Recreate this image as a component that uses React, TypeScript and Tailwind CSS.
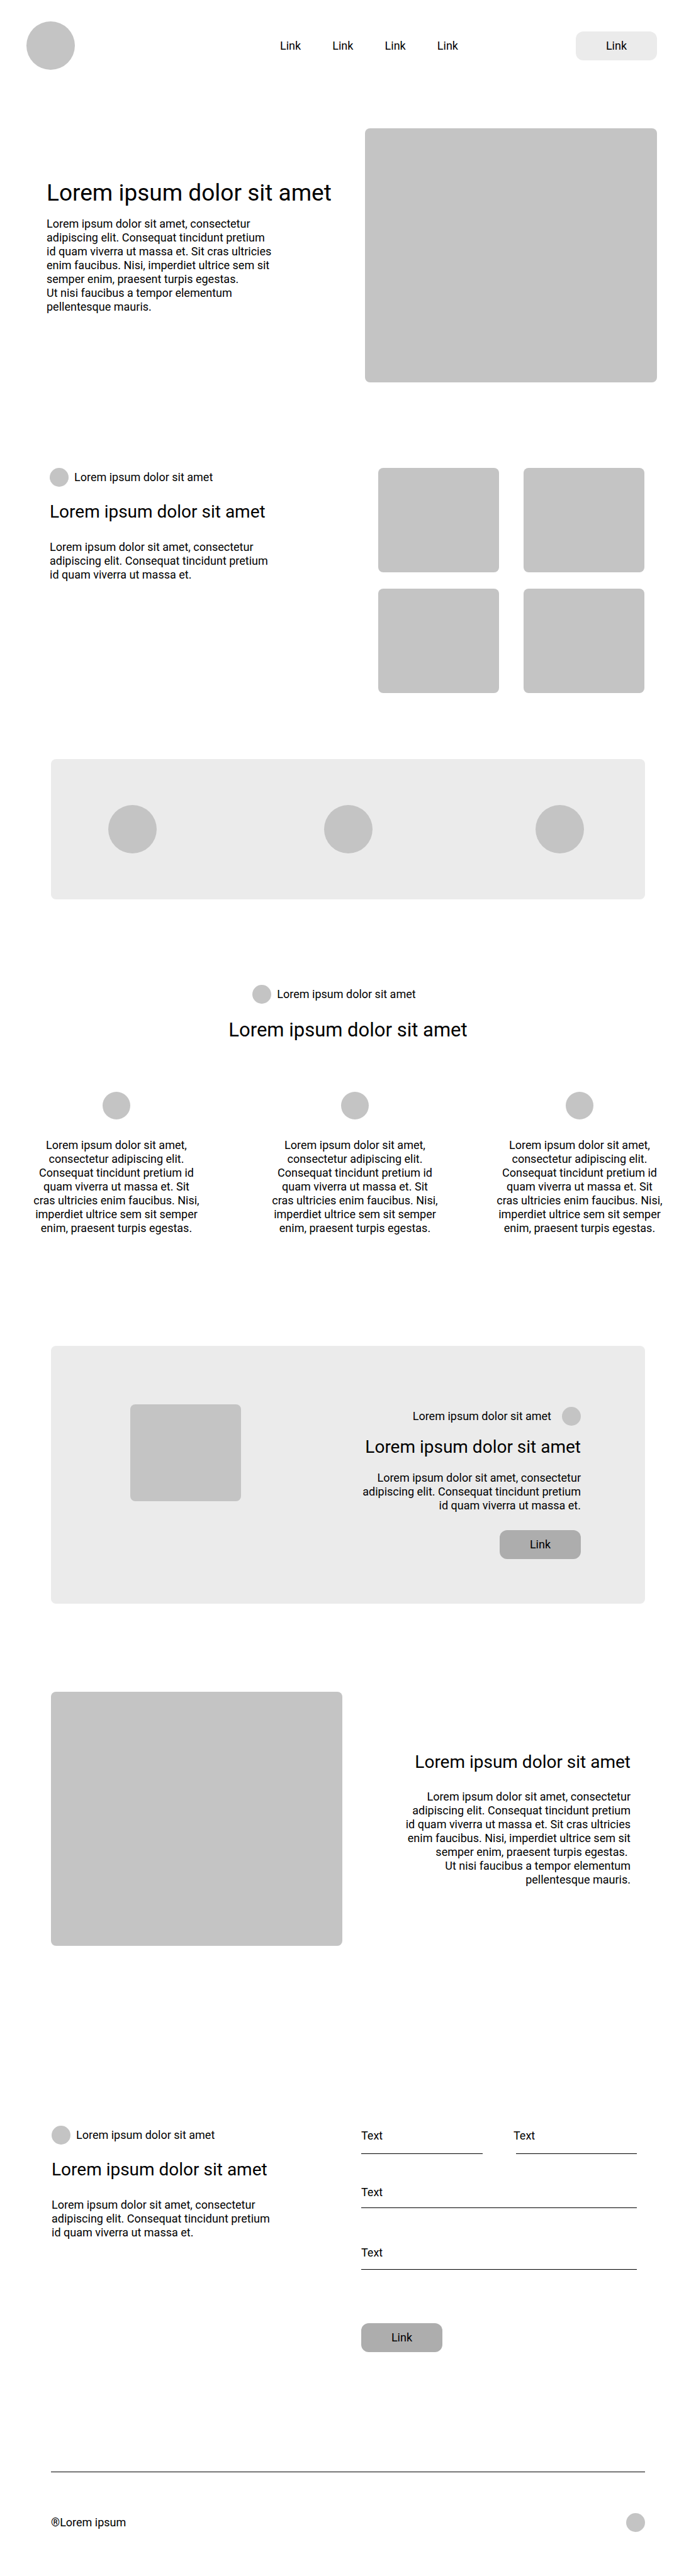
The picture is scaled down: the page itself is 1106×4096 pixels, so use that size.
import React from "react";

const TITLE = "Lorem ipsum dolor sit amet";
const INTRO = "Lorem ipsum dolor sit amet, consectetur adipiscing elit. Consequat tincidunt pretium id quam viverra ut massa et.";
const FULL = `${INTRO} Sit cras ultricies enim faucibus. Nisi, imperdiet ultrice sem sit semper enim, praesent turpis egestas.`;
const LONG = `${FULL}\u00a0\nUt nisi faucibus a tempor elementum pellentesque mauris.`;

function Dot({ className }: { className: string }) {
  return <div className={`shrink-0 rounded-full bg-[#c4c4c4] ${className}`} />;
}

function Block({ className }: { className: string }) {
  return <div className={`rounded-lg bg-[#c4c4c4] ${className}`} />;
}

function Heading({ className = "" }: { className?: string }) {
  return <h2 className={`text-[28px] leading-8 whitespace-nowrap ${className}`}>{TITLE}</h2>;
}

function Intro() {
  return (
    <div>
      <div className="flex items-center gap-[9px]">
        <Dot className="size-[30px]" />
        <p>{TITLE}</p>
      </div>
      <Heading className="mt-6" />
      <p className="mt-[29px] max-w-[360px]">{INTRO}</p>
    </div>
  );
}

function Service({ className = "" }: { className?: string }) {
  return (
    <div className={`flex w-[268px] flex-col items-center ${className}`}>
      <Dot className="size-11" />
      <p className="mt-[30px]">{FULL}</p>
    </div>
  );
}

function Field({ id, className = "", inputClassName }: { id: string; className?: string; inputClassName: string }) {
  return (
    <div className={`flex min-w-0 flex-col ${className}`}>
      <label htmlFor={id}>Text</label>
      <input id={id} type="text" className={`min-w-0 border-b border-black bg-transparent outline-none ${inputClassName}`} />
    </div>
  );
}

function Header() {
  return (
    <header className="grid grid-cols-[403fr_283fr_316fr] items-center pt-[34px] pr-[62px] pl-[42px]">
      <Dot className="size-[77px]" />
      <nav className="flex justify-between whitespace-nowrap">
        <a href="#features">Link</a>
        <a href="#services">Link</a>
        <a href="#about">Link</a>
        <a href="#contact">Link</a>
      </nav>
      <a href="#contact" className="flex h-[46px] w-[129px] items-center justify-center justify-self-end rounded-xl bg-[#ebebeb]">
        Link
      </a>
    </header>
  );
}

export default function App() {
  return (
    <div className="bg-white font-['Roboto',sans-serif] text-[18px] leading-[22px] text-black">
      <Header />

      <main>
        <section className="mt-[93px] grid grid-cols-[506fr_464fr] pr-[62px] pl-[74px]">
          <div className="min-w-0 pt-[81px]">
            <h1 className="text-[37px] leading-[44px] whitespace-nowrap">{TITLE}</h1>
            <p className="mt-4 max-w-[360px] whitespace-pre-line">{LONG}</p>
          </div>
          <Block className="h-[404px]" />
        </section>

        <section id="features" className="mt-[136px] grid grid-cols-[522fr_423fr] pr-[82px] pl-[79px]">
          <Intro />
          <div className="grid grid-cols-2 gap-x-[39px] gap-y-[26px]">
            <Block className="h-[166px]" />
            <Block className="h-[166px]" />
            <Block className="h-[166px]" />
            <Block className="h-[166px]" />
          </div>
        </section>

        <section className="mx-[81px] mt-[105px] grid h-[223px] grid-cols-[343fr_336fr_77fr] items-center rounded-lg bg-[#ebebeb] pr-[97px] pl-[91px]">
          <Dot className="size-[77px]" />
          <Dot className="size-[77px]" />
          <Dot className="size-[77px]" />
        </section>

        <section id="services" className="mt-[136px]">
          <div className="flex items-center justify-center gap-[9px] pr-11">
            <Dot className="size-[30px]" />
            <p>{TITLE}</p>
          </div>
          <h2 className="mt-6 text-center text-[31px] leading-9">{TITLE}</h2>
          <div className="mt-20 flex justify-between px-[51px] text-center">
            <Service />
            <Service className="ml-[22px]" />
            <Service />
          </div>
        </section>

        <section className="mx-[81px] mt-[176px] flex items-start justify-between rounded-lg bg-[#ebebeb] pt-[93px] pr-[102px] pb-[71px] pl-[126px]">
          <Block className="h-[154px] w-[176px]" />
          <div className="mt-1 flex flex-col items-end text-right">
            <div className="flex items-center gap-[17px]">
              <p>{TITLE}</p>
              <Dot className="size-[30px]" />
            </div>
            <Heading className="mt-[18px]" />
            <p className="mt-[22px] max-w-[360px]">{INTRO}</p>
            <a href="#about" className="mt-7 flex h-[46px] w-[129px] items-center justify-center rounded-xl bg-[#adadad]">
              Link
            </a>
          </div>
        </section>

        <section id="about" className="mt-[140px] grid grid-cols-[463fr_458fr] pr-[104px] pl-[81px]">
          <Block className="h-[404px]" />
          <div className="flex flex-col items-end pt-24 text-right">
            <Heading />
            <p className="mt-7 max-w-[360px] whitespace-pre-line">{LONG}</p>
          </div>
        </section>

        <section id="contact" className="mt-[286px] grid grid-cols-[492fr_438fr] pr-[94px] pl-[82px]">
          <Intro />
          <form className="min-w-0 pt-[5px]">
            <div className="grid grid-cols-[193fr_196fr] gap-[49px]">
              <Field id="first-name" inputClassName="h-[18px]" />
              <Field id="last-name" inputClassName="ml-1 h-[18px]" />
            </div>
            <Field id="email" className="mt-[50px]" inputClassName="h-[14px]" />
            <Field id="message" className="mt-[60px]" inputClassName="h-4" />
            <button type="button" className="mt-[85px] h-[46px] w-[129px] rounded-xl bg-[#adadad]">
              Link
            </button>
          </form>
        </section>
      </main>

      <footer className="mx-[81px] mt-[190px] flex items-center justify-between border-t border-black pt-[65px] pb-[70px]">
        <p>®Lorem ipsum</p>
        <Dot className="size-[30px]" />
      </footer>
    </div>
  );
}
